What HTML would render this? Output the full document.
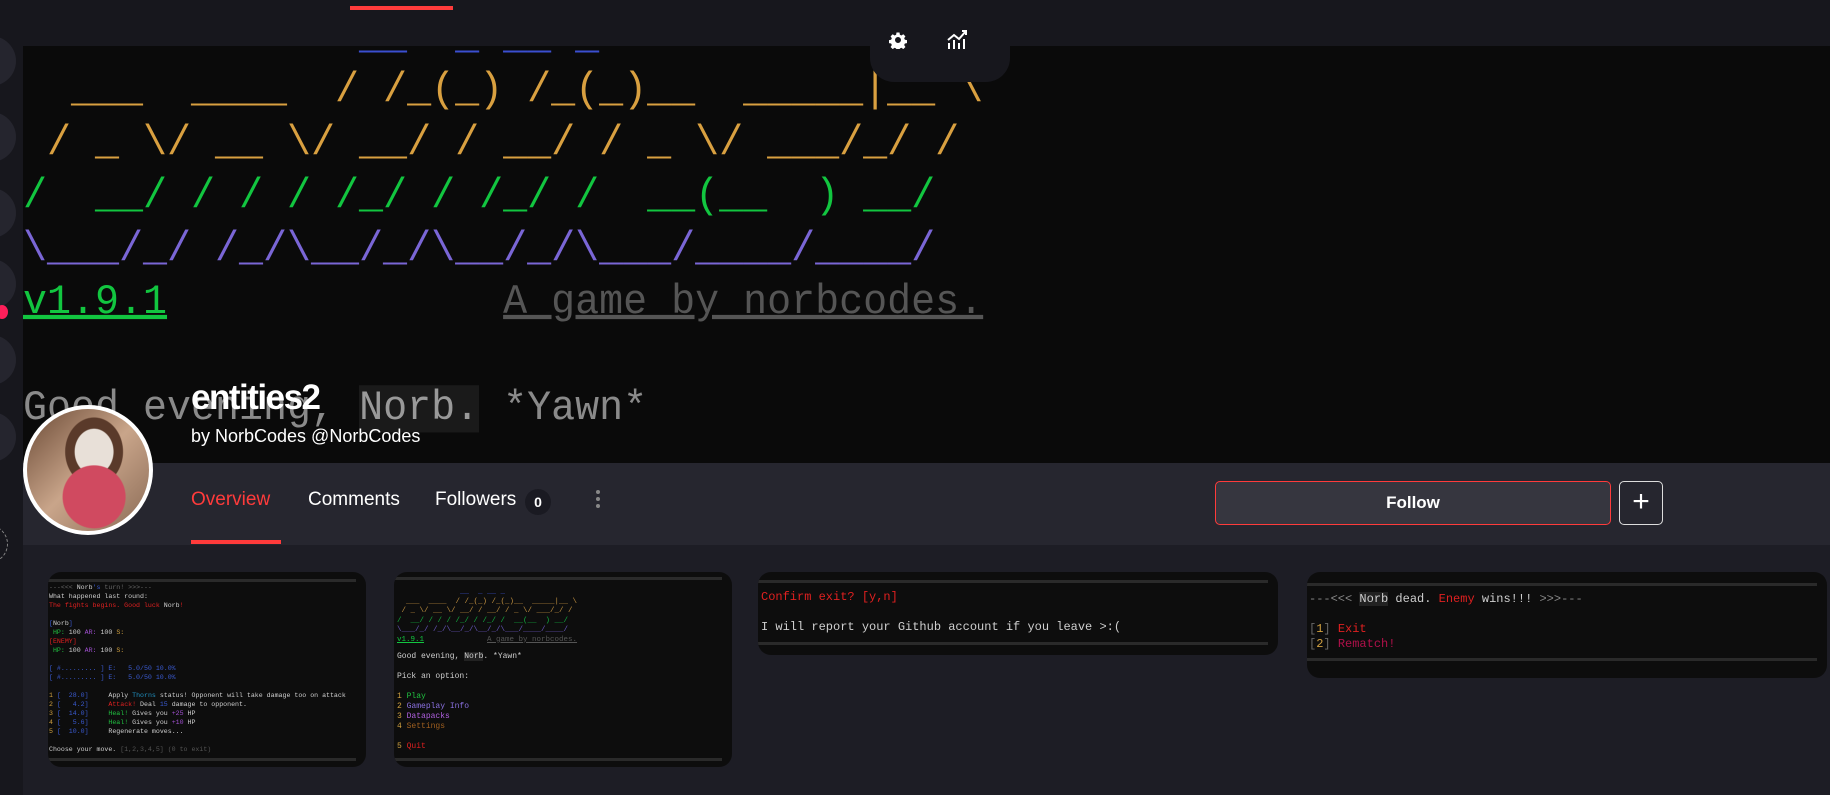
<!DOCTYPE html>
<html><head><meta charset="utf-8">
<style>
*{margin:0;padding:0;box-sizing:border-box}
body{width:1830px;height:795px;overflow:hidden;background:#1d1d25;font-family:"Liberation Sans",sans-serif;position:relative}
.abs{position:absolute}
.mono{font-family:"Liberation Mono",monospace;white-space:pre}
.side{left:0;top:0;width:23px;height:795px;background:#17171d}
.sc{position:absolute;left:-34px;width:50px;height:50px;border-radius:50%;background:#25252e}
.top{left:23px;top:0;width:1807px;height:46px;background:#17171d}
.banner{left:23px;top:46px;width:1807px;height:417px;background:#0a0a0a;overflow:hidden}
.art{position:absolute;left:0;font-size:40px;line-height:53px;letter-spacing:0;transform:scaleY(1.05);transform-origin:0 0}
.tabbar{left:23px;top:463px;width:1807px;height:82px;background:#26262f}
.card{position:absolute;background:#0d0d0d;border-radius:13px;overflow:hidden}
.rule{position:absolute;left:0;right:10px;height:3px;background:#2a2a2a}
.t{font-family:"Liberation Mono",monospace;white-space:pre;color:#cfcfcf;position:absolute}
</style></head><body>
<div class="abs side">
 <div class="sc" style="top:36px"></div><div class="sc" style="top:112px"></div><div class="sc" style="top:188px"></div>
 <div class="sc" style="top:259px"></div><div class="sc" style="top:335px"></div><div class="sc" style="top:412px"></div>
 <div class="abs" style="left:-4px;top:305px;width:12px;height:14px;border-radius:50%;background:#ff1f5a"></div>
 <div class="abs" style="left:-30px;top:525px;width:38px;height:38px;border-radius:50%;border:1.5px dashed #888"></div>
</div>
<div class="abs top"><div class="abs" style="left:327px;top:6px;width:103px;height:4px;background:#ff3b3b"></div></div>
<div class="abs banner">
 <div class="art mono" style="top:-36px;color:#3b4fd0">              __  _ __ _</div>
 <div class="art mono" style="top:17px;color:#d9a040">  ___  ____  / /_(_) /_(_)__  _____|__ \</div>
 <div class="art mono" style="top:70px;color:#d9a040"> / _ \/ __ \/ __/ / __/ / _ \/ ___/_/ /</div>
 <div class="art mono" style="top:123px;color:#12c640">/  __/ / / / /_/ / /_/ /  __(__  ) __/</div>
 <div class="art mono" style="top:176px;color:#7a66d6">\___/_/ /_/\__/_/\__/_/\___/____/____/</div>
 <div class="art mono" style="top:229px;color:#12c640"><span style="text-decoration:underline">v1.9.1</span><span style="color:#555">              <u>A game by norbcodes.</u></span></div>
 <div class="art mono" style="top:335px;color:#8a8a8a">Good evening, <span style="background:#1a1a1a;color:#999">Norb.</span> *Yawn*</div>
</div>
<div class="abs" style="left:870px;top:0;width:140px;height:82px;background:#17171d;border-radius:0 0 24px 24px"></div>
<svg class="abs" style="left:889px;top:31px" width="18" height="18" viewBox="0 0 24 24"><path fill="#fff" d="M12 8a4 4 0 1 0 0 8a4 4 0 1 0 0-8zm-2-6h4l.5 3 2 1 2.6-1.7 2.8 2.8-1.7 2.6 1 2 3 .5v4l-3 .5-1 2 1.7 2.6-2.8 2.8-2.6-1.7-2 1-.5 3h-4l-.5-3-2-1-2.6 1.7-2.8-2.8 1.7-2.6-1-2-3-.5v-4l3-.5 1-2-1.7-2.6 2.8-2.8 2.6 1.7 2-1z" fill-rule="evenodd"/></svg>
<svg class="abs" style="left:946px;top:29px" width="22" height="22" viewBox="0 0 22 22" fill="none" stroke="#fff" stroke-width="2"><path d="M3 20v-6M8 20v-9M13 20v-6M18 20v-10M2 11l6-5 5 4 7-8M16 2h4v4"/></svg>
<div class="abs tabbar"></div>
<div class="abs" style="left:23px;top:405px;width:130px;height:130px;border-radius:50%;background:#fff"></div>
<div class="abs" style="left:27px;top:409px;width:122px;height:122px;border-radius:50%;background:radial-gradient(circle at 55% 72%,#d04a60 0 28%,transparent 29%),radial-gradient(ellipse at 55% 35%,#e8e0d8 0 20%,#5a3a2a 21% 30%,transparent 31%),linear-gradient(135deg,#6b4a36,#c9a58a 50%,#8a6a55)"></div>
<div class="abs" style="left:191px;top:378px;color:#fff;font-weight:bold;font-size:35px;letter-spacing:-1.5px">entities2</div>
<div class="abs" style="left:191px;top:426px;color:#fff;font-size:18px">by NorbCodes @NorbCodes</div>
<div class="abs" style="left:191px;top:489px;color:#ff3b3b;font-size:19px">Overview</div>
<div class="abs" style="left:308px;top:489px;color:#fff;font-size:19px">Comments</div>
<div class="abs" style="left:435px;top:489px;color:#fff;font-size:19px">Followers</div>
<div class="abs" style="left:525px;top:489px;width:26px;height:26px;border-radius:50%;background:#1a1a22;color:#fff;font-size:14px;font-weight:bold;text-align:center;line-height:26px">0</div>
<div class="abs" style="left:596px;top:490px;width:4px;height:4px;border-radius:50%;background:#888;box-shadow:0 7px 0 #888,0 14px 0 #888"></div>
<div class="abs" style="left:191px;top:540px;width:90px;height:4px;background:#ff3b3b"></div>
<div class="abs" style="left:1215px;top:481px;width:396px;height:44px;background:#36363f;border:1px solid #ff3b3b;border-radius:5px;color:#fff;font-weight:bold;font-size:17px;text-align:center;line-height:42px">Follow</div>
<div class="abs" style="left:1619px;top:481px;width:44px;height:44px;border:1px solid #ddd;border-radius:5px;color:#fff;font-size:30px;text-align:center;line-height:40px">+</div>

<div class="card" style="left:48px;top:572px;width:318px;height:195px">
 <div class="rule" style="top:7px"></div>
 <div class="t" style="left:1px;top:11px;font-size:6.6px;line-height:9px"><span style="color:#666">---&lt;&lt;&lt; </span>Norb<span style="color:#3a5ad0">'s</span><span style="color:#666"> turn! &gt;&gt;&gt;---</span>
What happened last round:
<span style="color:#e02020">The fights begins. Good luck </span>Norb<span style="color:#e02020">!</span>

<span style="color:#3a5ad0">[</span>Norb<span style="color:#3a5ad0">]</span>
 <span style="color:#20c040">HP:</span> 100 <span style="color:#a050d0">AR:</span> 100 <span style="color:#d0a040">S:</span>
<span style="color:#e02020">[ENEMY]</span>
 <span style="color:#20c040">HP:</span> 100 <span style="color:#a050d0">AR:</span> 100 <span style="color:#d0a040">S:</span>

<span style="color:#3a5ad0">[ #......... ] E:   5.0/50 10.0%</span>
<span style="color:#3a5ad0">[ #......... ] E:   5.0/50 10.0%</span>

<span style="color:#d0a040">1</span> <span style="color:#3a5ad0">[  28.0]</span>     Apply <span style="color:#2090c0">Thorns</span> status! Opponent will take damage too on attack
<span style="color:#d0a040">2</span> <span style="color:#3a5ad0">[   4.2]</span>     <span style="color:#e02020">Attack!</span> Deal <span style="color:#3a5ad0">15</span> damage to opponent.
<span style="color:#d0a040">3</span> <span style="color:#3a5ad0">[  14.0]</span>     <span style="color:#20c040">Heal!</span> Gives you <span style="color:#a050d0">+25</span> HP
<span style="color:#d0a040">4</span> <span style="color:#3a5ad0">[   5.6]</span>     <span style="color:#20c040">Heal!</span> Gives you <span style="color:#a050d0">+10</span> HP
<span style="color:#d0a040">5</span> <span style="color:#3a5ad0">[  10.0]</span>     Regenerate moves...

Choose your move. <span style="color:#555">[1,2,3,4,5] (0 to exit)</span></div>
 <div class="rule" style="top:186px"></div>
</div>

<div class="card" style="left:394px;top:572px;width:338px;height:195px">
 <div class="rule" style="top:5px"></div>
 <div class="t" style="left:3px;top:16px;font-size:7.5px;line-height:9.5px"><span style="color:#3b4fd0">              __  _ __ _</span>
<span style="color:#c09040">  ___  ____  / /_(_) /_(_)__  _____|__ \</span>
<span style="color:#c09040"> / _ \/ __ \/ __/ / __/ / _ \/ ___/_/ /</span>
<span style="color:#12b040">/  __/ / / / /_/ / /_/ /  __(__  ) __/</span>
<span style="color:#6a58c0">\___/_/ /_/\__/_/\__/_/\___/____/____/</span>
<span style="color:#12c640"><u>v1.9.1</u></span>              <span style="color:#555"><u>A game by norbcodes.</u></span></div>
 <div class="t" style="left:3px;top:80px;font-size:8px;line-height:10px">Good evening, <span style="background:#222">Norb</span>. *Yawn*

Pick an option:

<span style="color:#d0a040">1</span> <span style="color:#20c040">Play</span>
<span style="color:#d0a040">2</span> <span style="color:#8a70e0">Gameplay Info</span>
<span style="color:#d0a040">3</span> <span style="color:#b060e0">Datapacks</span>
<span style="color:#d0a040">4</span> <span style="color:#a06020">Settings</span>

<span style="color:#d0a040">5</span> <span style="color:#e02020">Quit</span></div>
 <div class="rule" style="top:186px"></div>
</div>

<div class="card" style="left:758px;top:572px;width:520px;height:83px">
 <div class="rule" style="top:8px"></div>
 <div class="t" style="left:3px;top:18px;font-size:12px;line-height:15px;color:#e02020">Confirm exit? [y,n]</div>
 <div class="t" style="left:3px;top:48px;font-size:12px;line-height:15px">I will report your Github account if you leave &gt;:(</div>
 <div class="rule" style="top:70px"></div>
</div>

<div class="card" style="left:1307px;top:572px;width:520px;height:106px">
 <div class="rule" style="top:11px"></div>
 <div class="t" style="left:2px;top:20px;font-size:12px;line-height:15px"><span style="color:#888">---&lt;&lt;&lt; </span><span style="background:#222">Norb</span> dead. <span style="color:#e02020">Enemy</span> wins!!! <span style="color:#888">&gt;&gt;&gt;---</span></div>
 <div class="t" style="left:2px;top:50px;font-size:12px;line-height:15px"><span style="color:#666">[</span><span style="color:#d0a040">1</span><span style="color:#666">]</span> <span style="color:#e02020">Exit</span>
<span style="color:#666">[</span><span style="color:#d0a040">2</span><span style="color:#666">]</span> <span style="color:#b0104a">Rematch!</span></div>
 <div class="rule" style="top:86px"></div>
</div>
</body></html>
